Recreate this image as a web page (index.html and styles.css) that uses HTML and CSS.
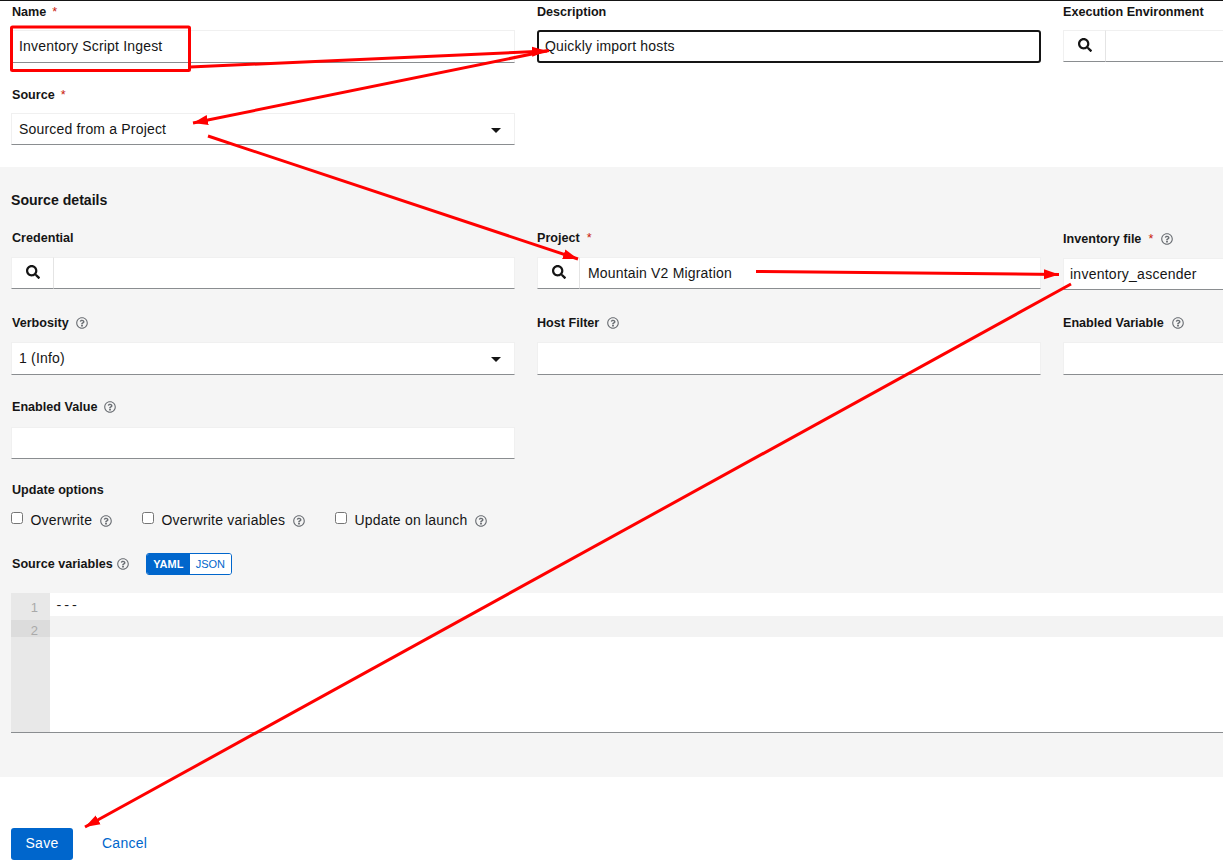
FILE: index.html
```html
<!DOCTYPE html>
<html lang="en">
<head>
<meta charset="utf-8">
<title>Edit inventory source</title>
<link rel="stylesheet" href="styles.css">
</head>
<body>
<svg class="defs" width="0" height="0" aria-hidden="true">
  <symbol id="i-search" viewBox="0 0 512 512"><path d="M505 442.7L405.3 343c-4.5-4.5-10.6-7-17-7H372c27.6-35.3 44-79.7 44-128C416 93.1 322.9 0 208 0S0 93.1 0 208s93.1 208 208 208c48.3 0 92.7-16.4 128-44v16.3c0 6.4 2.5 12.5 7 17l99.7 99.7c9.4 9.4 24.6 9.4 33.9 0l28.3-28.3c9.4-9.4 9.4-24.6.1-34zM208 336c-70.7 0-128-57.2-128-128 0-70.7 57.2-128 128-128 70.7 0 128 57.2 128 128 0 70.7-57.2 128-128 128z"/></symbol>
  <symbol id="i-help" viewBox="0 0 512 512"><path d="M256 8C119 8 8 119 8 256s111 248 248 248 248-111 248-248S393 8 256 8zm0 448c-110.5 0-200-89.5-200-200S145.5 56 256 56s200 89.5 200 200-89.5 200-200 200zm107.2-255.2c0 67.1-72.4 68.1-72.4 92.9V300c0 6.6-5.4 12-12 12h-45.6c-6.6 0-12-5.4-12-12v-8.7c0-35.7 27.1-50 47.6-61.5 17.6-9.9 28.4-16.6 28.4-29.6 0-17.2-22-28.7-39.8-28.7-23.2 0-33.9 11-49 30-4.1 5.1-11.5 6.1-16.7 2.1l-27.8-21.1c-5.1-3.9-6.3-11.1-2.7-16.4C184.8 131.5 214.9 112 261.8 112c49.1 0 101.4 38.3 101.4 88.8zM298 368c0 23.2-18.8 42-42 42s-42-18.8-42-42 18.8-42 42-42 42 18.8 42 42z"/></symbol>
</svg>

<main class="page">
  <section class="top">
    <div class="grid">
      <div class="field">
        <div class="label"><span>Name</span><span class="req">*</span></div>
        <div class="control">Inventory Script Ingest</div>
      </div>
      <div class="field">
        <div class="label"><span>Description</span></div>
        <div class="control focused">Quickly import hosts</div>
      </div>
      <div class="field">
        <div class="label"><span>Execution Environment</span></div>
        <div class="lookup">
          <div class="lookup-btn"><svg class="search"><use href="#i-search"/></svg></div>
          <div class="control grow"></div>
        </div>
      </div>
      <div class="field">
        <div class="label"><span>Source</span><span class="req">*</span></div>
        <div class="control select short">Sourced from a Project<span class="caret"></span></div>
      </div>
    </div>
  </section>

  <section class="details">
    <h2 class="section-title">Source details</h2>
    <div class="grid grid-details">
      <div class="field">
        <div class="label"><span>Credential</span></div>
        <div class="lookup">
          <div class="lookup-btn"><svg class="search"><use href="#i-search"/></svg></div>
          <div class="control grow"></div>
        </div>
      </div>
      <div class="field">
        <div class="label"><span>Project</span><span class="req">*</span></div>
        <div class="lookup">
          <div class="lookup-btn"><svg class="search"><use href="#i-search"/></svg></div>
          <div class="control grow">Mountain V2 Migration</div>
        </div>
      </div>
      <div class="field shifted">
        <div class="label"><span>Inventory file</span><span class="req">*</span><svg class="help"><use href="#i-help"/></svg></div>
        <div class="control short tight">inventory_ascender</div>
      </div>
      <div class="field">
        <div class="label"><span>Verbosity</span><svg class="help"><use href="#i-help"/></svg></div>
        <div class="control select">1 (Info)<span class="caret"></span></div>
      </div>
      <div class="field">
        <div class="label"><span>Host Filter</span><svg class="help"><use href="#i-help"/></svg></div>
        <div class="control"></div>
      </div>
      <div class="field">
        <div class="label"><span>Enabled Variable</span><svg class="help"><use href="#i-help"/></svg></div>
        <div class="control"></div>
      </div>
      <div class="field raised">
        <div class="label"><span>Enabled Value</span><svg class="help"><use href="#i-help"/></svg></div>
        <div class="control short"></div>
      </div>
    </div>

    <div class="label options-title"><span>Update options</span></div>
    <div class="options">
      <label class="option"><input type="checkbox"><span>Overwrite</span><svg class="help"><use href="#i-help"/></svg></label>
      <label class="option"><input type="checkbox"><span>Overwrite variables</span><svg class="help"><use href="#i-help"/></svg></label>
      <label class="option"><input type="checkbox"><span>Update on launch</span><svg class="help"><use href="#i-help"/></svg></label>
    </div>

    <div class="vars-head">
      <div class="label vars-label"><span>Source variables</span><svg class="help"><use href="#i-help"/></svg></div>
      <div class="toggle"><span class="toggle-on">YAML</span><span class="toggle-off">JSON</span></div>
    </div>

    <div class="editor">
      <div class="gutter"><div class="num n1">1</div><div class="num n2">2</div></div>
      <div class="code"><div class="line l1">---</div><div class="line l2"></div></div>
    </div>
  </section>

  <footer class="actions">
    <button class="save" type="button">Save</button>
    <a class="cancel" href="#">Cancel</a>
  </footer>
</main>

<svg class="annotations" width="1223" height="864" viewBox="0 0 1223 864" aria-hidden="true">
  <defs>
    <marker id="head" markerUnits="userSpaceOnUse" markerWidth="16" markerHeight="12" refX="15" refY="5.5" orient="auto">
      <path d="M0 0.5L15 5.5L0 10.5Z" fill="#f00"/>
    </marker>
  </defs>
  <rect class="box" x="11.5" y="27" width="178" height="43.5" rx="1"/>
  <line class="arrow" x1="190" y1="67" x2="547" y2="51"/>
  <line class="arrow" x1="549" y1="50.5" x2="193" y2="123"/>
  <line class="arrow" x1="208" y1="136" x2="578" y2="259"/>
  <line class="arrow" x1="756" y1="271.5" x2="1059" y2="274.5"/>
  <line class="arrow" x1="1071" y1="284" x2="85" y2="827"/>
</svg>
</body>
</html>
```
FILE: styles.css
```css
* { box-sizing: border-box; }
html, body { margin: 0; padding: 0; }
body {
  width: 1223px;
  height: 864px;
  overflow: hidden;
  position: relative;
  background: #fff;
  color: #151515;
  font-family: "Liberation Sans", Arial, sans-serif;
  font-size: 14px;
}
.defs { position: absolute; }
.page { border-top: 1px solid #151515; }

.grid {
  display: grid;
  grid-template-columns: 504px 504px 160px;
  column-gap: 22px;
  row-gap: 21px;
  padding-left: 11px;
}
.grid > .field:nth-child(3n) .control { border-right: 0; }
.grid > .field:nth-child(3n+1) .label { padding-left: 1px; }
.grid > .field:nth-child(3n+1) .req { margin-left: 6px; }
.grid > .field:nth-child(3n+1) .help { margin-left: 7px; }
.top { height: 166px; }
.details {
  height: 610px;
  background: #f5f5f5;
  padding-top: 23px;
}
.section-title {
  margin: 0 0 18px 11px;
  height: 20px;
  line-height: 20px;
  font-size: 14.1px;
  font-weight: 700;
}
.grid-details { row-gap: 23px; }
.label {
  display: flex;
  align-items: center;
  height: 20px;
  padding-top: 1px;
  margin-bottom: 9px;
  font-size: 12.6px;
  font-weight: 700;
  white-space: nowrap;
}
.grid-details .label { padding-top: 0; }
.req { color: #c9190b; font-weight: 400; margin-left: 7px; }
.help {
  width: 12px;
  height: 12px;
  margin-left: 8px;
  fill: #6a6e73;
  flex: none;
}
.control {
  position: relative;
  height: 33px;
  padding-left: 7px;
  line-height: 31px;
  font-size: 14px;
  letter-spacing: .18px;
  background: #fff;
  border: 1px solid #f0f0f0;
  border-bottom-color: #8a8d90;
}
.short { height: 32px; }
.tight { padding-left: 6px; letter-spacing: .25px; }
.focused {
  padding-left: 6px;
  line-height: 29px;
  border: 2px solid #151515;
  border-radius: 3px;
}
.caret {
  position: absolute;
  right: 13px;
  top: 14px;
  width: 0;
  height: 0;
  border-left: 5px solid transparent;
  border-right: 5px solid transparent;
  border-top: 5px solid #151515;
}
.lookup { display: flex; height: 32px; }
.lookup-btn {
  flex: none;
  width: 43px;
  display: flex;
  align-items: center;
  justify-content: center;
  background: #fff;
  border: 1px solid #f0f0f0;
  border-bottom-color: #8a8d90;
  border-right-color: #e4e4e4;
}
.search { width: 14px; height: 14px; fill: #151515; margin-top: -2px; }
.grow { flex: 1; height: 32px; border-left: 0; padding-left: 8px; }
.shifted { padding-top: 1px; }
.raised .label { margin-top: -1px; margin-bottom: 10px; }

.options-title { margin: 20px 0 11px 12px; height: 20px; }
.options { display: flex; padding-left: 11px; height: 20px; }
.option {
  display: flex;
  align-items: center;
  letter-spacing: .2px;
}
.option input { width: 12px; height: 12px; margin: -5px 7.5px 0 0; }
.option .help { margin-left: 8px; margin-top: 2px; }
.option:nth-child(1) { width: 131px; }
.option:nth-child(2) { width: 193px; }

.vars-head {
  display: flex;
  align-items: center;
  height: 22px;
  margin: 23px 0 18px 12px;
}
.vars-label { margin: 0; padding-top: 0; }
.vars-label .help { margin-left: 4px; }
.toggle {
  display: flex;
  margin-left: 17px;
  width: 86px;
  height: 22px;
  font-size: 11px;
  font-weight: 700;
  line-height: 20px;
  text-align: center;
  border: 1px solid #06c;
  border-radius: 3px;
  overflow: hidden;
}
.toggle-on { width: 43px; background: #06c; color: #fff; }
.toggle-off { flex: 1; background: #fff; color: #06c; font-weight: 400; }

.editor {
  display: flex;
  height: 140px;
  margin-left: 11px;
  background: #fff;
  border-bottom: 1px solid #8a8d90;
}
.gutter { width: 39px; background: #e8e8e8; flex: none; }
.num {
  text-align: right;
  padding-right: 12px;
  color: #aaa;
  font-family: "Liberation Sans", Arial, sans-serif;
  font-size: 13px;
}
.n1 { height: 27px; line-height: 30px; }
.n2 { height: 17px; line-height: 21px; background: #dcdcdc; }
.code { flex: 1; }
.line { padding-left: 5px; font: 13px/25px "Liberation Mono", monospace; }
.l1 { height: 23px; }
.l2 { height: 21px; background: #f3f3f3; }

.actions {
  display: flex;
  align-items: center;
  padding: 51px 0 0 11px;
}
.save {
  width: 62px;
  height: 32px;
  padding: 0 0 2px;
  border: 0;
  border-radius: 3px;
  background: #06c;
  color: #fff;
  font: 14px "Liberation Sans", Arial, sans-serif;
  letter-spacing: .25px;
}
.cancel {
  margin: -2px 0 0 29px;
  color: #06c;
  text-decoration: none;
  letter-spacing: .25px;
}

.annotations { position: absolute; left: 0; top: 0; pointer-events: none; }
.box { fill: none; stroke: #f00; stroke-width: 3; }
.arrow { stroke: #f00; stroke-width: 3; marker-end: url(#head); }
```
